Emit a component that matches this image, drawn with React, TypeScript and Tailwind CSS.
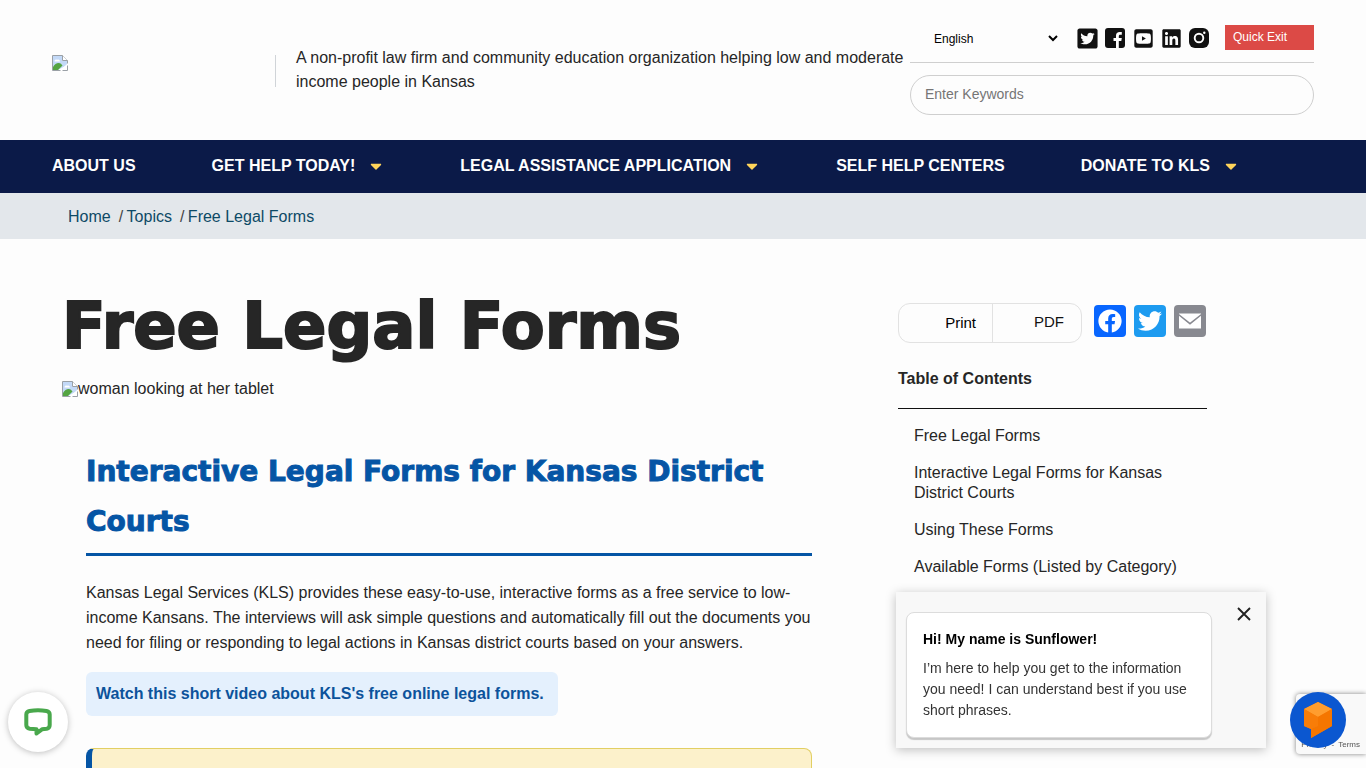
import React from "react";
import {
  FaTwitterSquare,
  FaYoutubeSquare,
  FaLinkedin,
  FaFacebook,
  FaTwitter,
  FaCaretDown,
} from "react-icons/fa";

function MissingImage({ label }: { label?: string }) {
  return (
    <svg className="block size-4 shrink-0" viewBox="0 0 16 16" role="img" aria-label={label}>
      <path d="M.5.5h10l5 5v10H.5z" fill="#fff" stroke="#9aa0a6" />
      <path d="M1 1h9v5h5v4L6 15H1z" fill="#c3d9f7" />
      <path d="M2.5 6.5a1.7 1.7 0 0 1 2.6-1.7A2 2 0 0 1 8 6.5z" fill="#fff" />
      <path d="M1 15v-3c2-3 5-5 8-3.200l1.500 1.700L6 15z" fill="#54a441" />
      <path d="M16 8 8 16h2l6-6z" fill="#fff" />
      <path d="M10.500.5v5h5" fill="#fff" stroke="#9aa0a6" />
    </svg>
  );
}

function InstagramTile() {
  return (
    <svg className="size-5" viewBox="0 0 20 20">
      <rect width="20" height="20" rx="6" fill="#111" />
      <circle cx="10" cy="10" r="4.300" fill="none" stroke="#fff" strokeWidth="1.900" />
      <circle cx="15.300" cy="4.700" r="1.200" fill="#fff" />
    </svg>
  );
}

function FacebookTile() {
  return (
    <svg className="size-5" viewBox="0 0 20 20">
      <rect width="20" height="20" rx="3" fill="#111" />
      <path d="M11 20v-7H8.500v-3H11V7.800C11 5.200 12.400 4 14.700 4c1 0 1.800.1 2.100.1v2.700h-1.500c-1.200 0-1.500.6-1.500 1.500V10h3l-.5 3h-2.500v7z" fill="#fff" />
    </svg>
  );
}

const socials = [
  { name: "Twitter", icon: <FaTwitterSquare className="size-[23px]" /> },
  { name: "Facebook", icon: <FacebookTile /> },
  { name: "YouTube", icon: <FaYoutubeSquare className="size-[21px]" /> },
  { name: "LinkedIn", icon: <FaLinkedin className="size-[21px]" /> },
  { name: "Instagram", icon: <InstagramTile /> },
];

const menu = [
  { label: "ABOUT US", sub: false },
  { label: "GET HELP TODAY!", sub: true },
  { label: "LEGAL ASSISTANCE APPLICATION", sub: true },
  { label: "SELF HELP CENTERS", sub: false },
  { label: "DONATE TO KLS", sub: true },
];

const contents = [
  "Free Legal Forms",
  "Interactive Legal Forms for Kansas District Courts",
  "Using These Forms",
  "Available Forms (Listed by Category)",
];

function Header() {
  return (
    <header className="flex h-[140px] items-start px-[52px]">
      <a href="#" aria-label="Kansas Legal Services" className="mt-[55px] flex h-8 w-56 shrink-0 border-r border-[#d0d4d8]">
        <MissingImage label="Logo" />
      </a>
      <p className="mt-[46px] flex-1 pl-5 text-base leading-6">
        A non-profit law firm and community education organization helping low and moderate income people in Kansas
      </p>
      <div className="mt-[25px] w-[404px] shrink-0">
        <div className="flex h-[38px] items-start justify-between border-b border-[#cfcfcf]">
          <select aria-label="Language" className="ml-5 h-[27px] w-[131px] bg-transparent text-xs text-black">
            <option>English</option>
          </select>
          <div className="flex items-start">
            <div className="flex items-center">
              {socials.map((s) => (
                <a key={s.name} href="#" aria-label={s.name} className="flex h-[26px] w-7 items-center justify-center text-[#111]">
                  {s.icon}
                </a>
              ))}
            </div>
            <button className="ml-3 h-[25px] w-[89px] bg-[#dc4a46] px-2 pb-0.5 text-left text-xs text-white">Quick Exit</button>
          </div>
        </div>
        <input
          type="text"
          aria-label="Search"
          placeholder="Enter Keywords"
          className="mt-3 block h-10 w-full rounded-full border border-[#cfcfcf] px-3.5 pb-0.5 text-sm placeholder:text-[#757575]"
        />
      </div>
    </header>
  );
}

function ChatPrompt() {
  return (
    <section className="fixed right-[100px] bottom-5 flex w-[370px] items-start bg-[#f8f8f8] pt-5 pb-[10px] pl-2.5 shadow-[0_2px_10px_rgba(0,0,0,0.25)]">
      <div className="w-[306px] rounded-lg border border-[#dcdcdc] bg-white px-4 py-4 text-sm leading-[21px] shadow-[0_2px_1px_rgba(0,0,0,0.2)]">
        <h2 className="mb-2 font-bold text-black">Hi! My name is Sunflower!</h2>
        <p className="text-[#333]">
          I’m here to help you get to the information you need! I can understand best if you use short phrases.
        </p>
      </div>
      <button aria-label="Close" className="absolute top-[15px] right-[15px]">
        <svg className="size-3.5" viewBox="0 0 14 14">
          <path d="M1 1l12 12M13 1 1 13" stroke="#222" strokeWidth="1.900" />
        </svg>
      </button>
    </section>
  );
}

export default function App() {
  return (
    <div className="h-screen overflow-hidden bg-[#fdfdfd] font-['Liberation_Sans',Arial,sans-serif] text-[#262626]">
      <Header />
      <nav className="flex h-[53px] items-center gap-[76px] bg-[#0b1a48] px-[52px] pb-0.5 text-base font-bold whitespace-nowrap text-white">
        {menu.map((m) => (
          <a key={m.label} href="#" className="flex items-center gap-[13px]">
            {m.label}
            {m.sub && <FaCaretDown className="h-[18px] w-4 text-[#ffd45a]" />}
          </a>
        ))}
      </nav>
      <nav aria-label="Breadcrumb" className="flex h-[46px] items-center gap-2 bg-[#e3e7eb] px-[68px] pt-0.5 text-[#0d4a66]">
        <a href="#">Home</a>
        <span>
          <span className="text-[#444]">/</span> <a href="#" className="-ml-px">Topics</a>
        </span>
        <span>
          <span className="text-[#444]">/</span> <a href="#" className="-ml-px">Free Legal Forms</a>
        </span>
      </nav>

      <div className="flex gap-[62px] pr-[159px] pl-[62px]">
        <main className="min-w-0 flex-1 pt-[51px]">
          <h1 className="font-['DejaVu_Sans',sans-serif] text-[64px] leading-[72px] font-bold [-webkit-text-stroke:2px_#262626]">
            Free Legal Forms
          </h1>
          <div className="mt-[15px] flex h-6 items-center">
            <MissingImage />
            <span>woman looking at her tablet</span>
          </div>
          <article className="px-6 pt-[46px]">
            <h2 className="border-b-[3px] border-[#0555a5] pb-1.5 font-['DejaVu_Sans',sans-serif] text-[28px] leading-[50px] font-bold text-[#0555a5] [-webkit-text-stroke:1px_#0555a5]">
              Interactive Legal Forms for Kansas District Courts
            </h2>
            <p className="mt-6 text-base leading-[25px]">
              Kansas Legal Services (KLS) provides these easy-to-use, interactive forms as a free service to low-income
              Kansans. The interviews will ask simple questions and automatically fill out the documents you need for
              filing or responding to legal actions in Kansas district courts based on your answers.
            </p>
            <a href="#" className="mt-[17px] inline-block rounded-md bg-[#e4f0fd] py-2.5 pr-3.5 pl-2.5 leading-6 font-bold text-[#0c539b]">
              Watch this short video about KLS's free online legal forms.
            </a>
            <div className="mt-8 h-28 rounded-lg border border-l-[6px] border-[#e2cf63] border-l-[#0555a5] bg-[#fcf1cb]" />
          </article>
        </main>

        <aside className="w-[309px] shrink-0 pt-16">
          <div className="flex items-center gap-3">
            <div className="flex h-10 w-[184px] shrink-0 overflow-hidden rounded-xl border border-[#e2e2e2] text-base text-[#111]">
              <button className="w-[94px] border-r border-[#e2e2e2] pr-4 text-right text-[15px] text-black">Print</button>
              <button className="flex-1 pr-[17px] pb-0.5 text-right text-[15px]">PDF</button>
            </div>
            <div className="flex gap-2 pb-1">
              <a href="#" aria-label="Share on Facebook" className="flex size-8 items-center justify-center rounded bg-[#0866ff] text-white">
                <FaFacebook className="size-6" />
              </a>
              <a href="#" aria-label="Share on Twitter" className="flex size-8 items-center justify-center rounded bg-[#1d9bf0] text-white">
                <FaTwitter className="size-6" />
              </a>
              <a href="#" aria-label="Share by email" className="flex size-8 items-center justify-center rounded bg-[#888990]">
                <svg className="size-8" viewBox="0 0 32 32">
                  <path d="M5 8.500h22v15H5z" fill="#fff" />
                  <path d="M4.500 9.500 16 18.700 27.500 9.500" fill="none" stroke="#888990" strokeWidth="1.500" />
                </svg>
              </a>
            </div>
          </div>
          <h2 className="mt-6 border-b border-[#111] pb-[17px] text-base leading-6 font-bold">Table of Contents</h2>
          <ul className="mt-[17px] flex flex-col gap-[17px] pl-4 text-base leading-5">
            {contents.map((c) => (
              <li key={c}>
                <a href="#">{c}</a>
              </li>
            ))}
          </ul>
        </aside>
      </div>

      <ChatPrompt />

      <div className="fixed right-0 bottom-3.5 flex h-[60px] w-[70px] items-end justify-end overflow-hidden rounded-l-sm bg-[#f9f9f9] pr-1.5 pb-1 text-[8px] leading-[10px] whitespace-nowrap text-[#555] shadow-[0_0_5px_gray]">
        <a href="#">Privacy</a>
        <span className="px-1">-</span>
        <a href="#">Terms</a>
      </div>
      <button aria-label="Open assistant" className="fixed right-5 bottom-5 flex size-14 items-center justify-center rounded-full bg-[#0b57d0]">
        <svg className="h-9 w-[30px]" viewBox="0 0 30 36">
          <path d="M15 0 29 7v17L8 36v-9L1 24V7z" fill="#f57c0a" />
          <path d="M15 0 29 7 15 15 1 7z" fill="#ff9d2e" />
          <path d="M15 15 29 7v17L8 36v-9l7-3z" fill="#f57600" />
          <path d="M1 7l14 8v9l-7 3-7-3z" fill="#f87d08" />
        </svg>
      </button>
      <button aria-label="Open chat" className="fixed bottom-4 left-2 flex size-[60px] items-center justify-center rounded-full bg-white shadow-[0_1px_6px_rgba(0,0,0,0.25)]">
        <svg className="size-7" viewBox="0 0 28 28">
          <path
            d="M5.500 3C10 2.200 18 2.200 22.500 3 24.500 3.500 25.700 4.500 25.700 6.500v10.500c0 2.300-1 3.400-3 3.800l-4.700.5-5.500 4.200v-4.200l-6.700-.5c-2-.4-3.500-1.500-3.500-3.800V6.500C2.300 4.500 3.500 3.500 5.500 3z"
            fill="none"
            stroke="#49a84c"
            strokeWidth="4"
            strokeLinejoin="round"
          />
        </svg>
      </button>
    </div>
  );
}
